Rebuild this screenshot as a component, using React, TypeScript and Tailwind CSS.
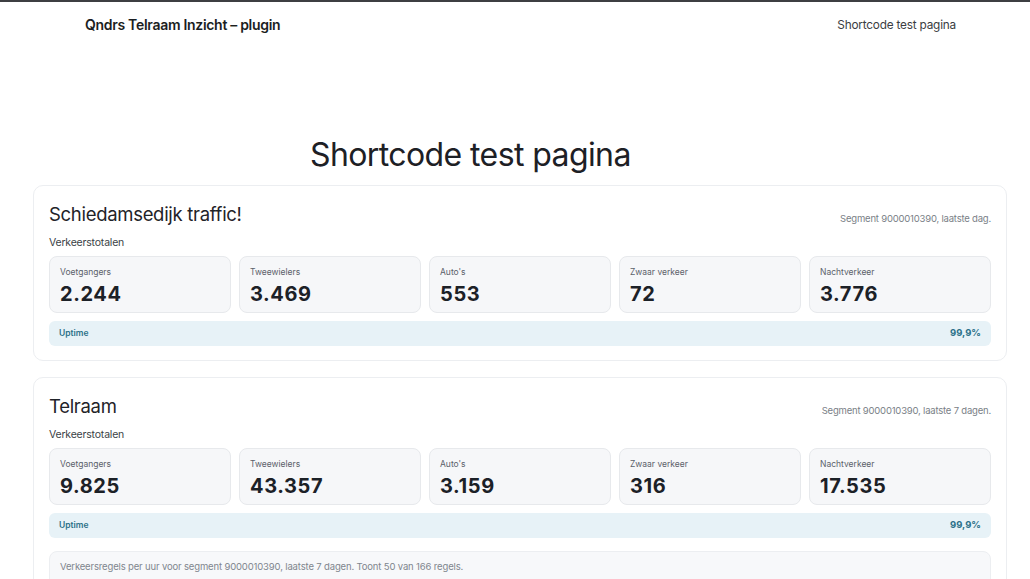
import React from "react";

type Stat = { label: string; value: string };

const panels: {
  title: string;
  segment: string;
  stats: Stat[];
  uptime: string;
  rows?: string;
}[] = [
  {
    title: "Schiedamsedijk traffic!",
    segment: "Segment 9000010390, laatste dag.",
    stats: [
      { label: "Voetgangers", value: "2.244" },
      { label: "Tweewielers", value: "3.469" },
      { label: "Auto's", value: "553" },
      { label: "Zwaar verkeer", value: "72" },
      { label: "Nachtverkeer", value: "3.776" },
    ],
    uptime: "99,9%",
  },
  {
    title: "Telraam",
    segment: "Segment 9000010390, laatste 7 dagen.",
    stats: [
      { label: "Voetgangers", value: "9.825" },
      { label: "Tweewielers", value: "43.357" },
      { label: "Auto's", value: "3.159" },
      { label: "Zwaar verkeer", value: "316" },
      { label: "Nachtverkeer", value: "17.535" },
    ],
    uptime: "99,9%",
    rows: "Verkeersregels per uur voor segment 9000010390, laatste 7 dagen. Toont 50 van 166 regels.",
  },
];

const Panel = ({ panel }: { panel: (typeof panels)[number] }) => (
  <section className="rounded-[10px] border border-[#eceef1] bg-white px-[15px] pt-[15px] pb-[14px]">
    <div className="flex items-end justify-between">
      <h2 className="text-[18.5px] leading-[26px] text-[#1f2328] tracking-[-0.3px]">
        {panel.title}
      </h2>
      <span className="text-[9.5px] leading-[14px] text-[#7a7f87] tracking-[-0.2px] mb-[1px]">
        {panel.segment}
      </span>
    </div>
    <div className="mt-[9px] text-[10.5px] leading-[14px] text-[#3a3f46] tracking-[-0.2px]">
      Verkeerstotalen
    </div>
    <div className="mt-[6px] grid grid-cols-5 gap-[8px]">
      {panel.stats.map((s) => (
        <div
          key={s.label}
          className="h-[57px] rounded-[8px] border border-[#e7e9ec] bg-[#f6f7f9] px-[10px] pt-[10px]"
        >
          <div className="text-[8.5px] leading-[11px] text-[#5b616a]">{s.label}</div>
          <div className="mt-[4px] text-[20px] leading-[24px] font-bold text-[#1c2127] tracking-[0.6px]">
            {s.value}
          </div>
        </div>
      ))}
    </div>
    <div className="mt-[8px] flex h-[25px] items-center justify-between rounded-[6px] bg-[#e7f2f7] px-[10px] text-[8.5px] font-semibold text-[#2c7189]">
      <span>Uptime</span>
      <span className="text-[9.5px] font-bold">{panel.uptime}</span>
    </div>
    {panel.rows && (
      <div className="mt-[13px] h-[60px] rounded-[8px] border border-[#eceef1] bg-[#f7f8fa] px-[10px] pt-[8px] text-[9.5px] leading-[14px] text-[#80868e] tracking-[-0.15px]">
        {panel.rows}
      </div>
    )}
  </section>
);

export default function App() {
  return (
    <div
      className="h-[579px] w-[1030px] overflow-hidden bg-white border-t-2 border-[#3d3f42]"
      style={{ fontFamily: "Inter, 'Noto Sans', sans-serif" }}
    >
      <header className="flex h-[44px] items-center justify-between pl-[85px] pr-[74px]">
        <span className="text-[14px] font-semibold text-[#1b1e22] tracking-[-0.3px]">
          Qndrs Telraam Inzicht – plugin
        </span>
        <span className="mt-[3px] text-[11.8px] text-[#3a3d42] tracking-[-0.2px]">
          Shortcode test pagina
        </span>
      </header>
      <h1 className="mt-[89px] pl-[310px] text-[32px] leading-[40px] text-[#1d2025] tracking-[-0.6px]">
        Shortcode test pagina
      </h1>
      <main className="mt-[10px] flex flex-col gap-[16px] px-[33px] pr-[23px]">
        {panels.map((p) => (
          <Panel key={p.title} panel={p} />
        ))}
      </main>
    </div>
  );
}
